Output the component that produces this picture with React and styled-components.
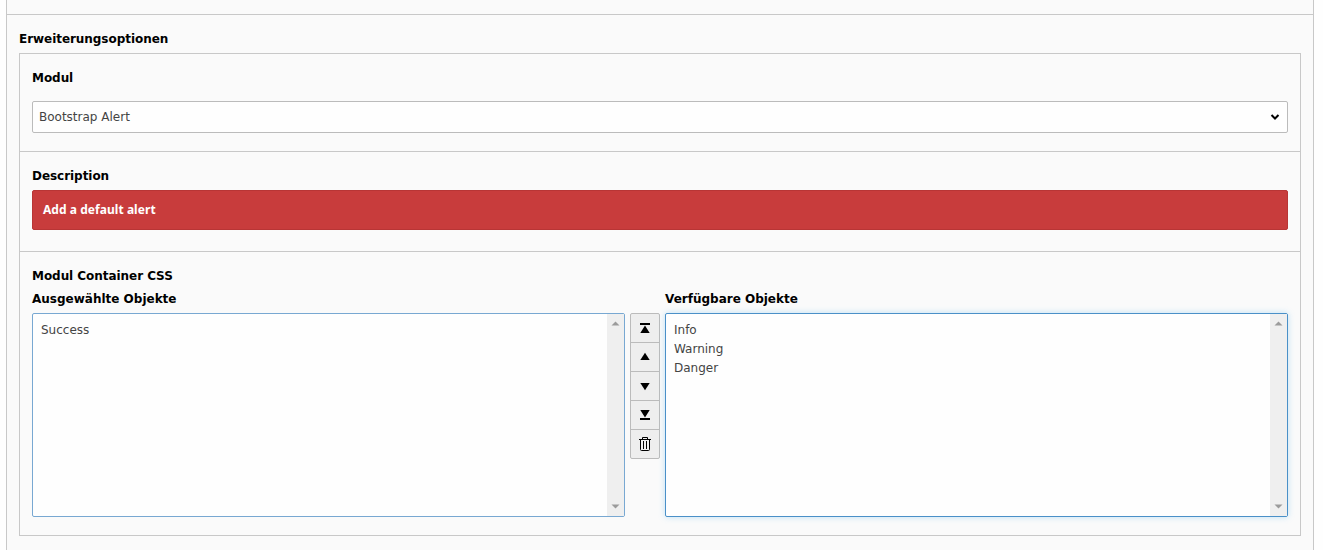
import React from 'react';
import styled, { createGlobalStyle } from 'styled-components';

const Global = createGlobalStyle`
  * { box-sizing: border-box; }
  body { margin: 0; background: #fefefe; overflow: hidden; font: 12px/18px "DejaVu Sans", Verdana, sans-serif; color: #000; }
`;
const Page = styled.main`
  width: 1308px; height: 550px; margin-left: 6px; background: #fafafa;
  border: solid #c8c8c8; border-width: 0 1px;
`;
const Previous = styled.div`height: 15px; border-bottom: 1px solid #c8c8c8;`;
const Body = styled.div`padding: 15px 12px 0;`;
const Label = styled.div`
  height: 18px; line-height: 18px; font-weight: bold; white-space: nowrap;
  letter-spacing: ${p => p.$spacing ?? -0.05}px;
`;
const Panel = styled.div`margin-top: 5px; height: 483px; border: 1px solid #c8c8c8;`;
const Section = styled.section`
  height: ${p => p.$height}px; padding: 15px 12px 0;
  border-bottom: ${p => (p.$last ? 0 : 1)}px solid #c8c8c8;
`;
const Select = styled.div`
  display: flex; align-items: center; justify-content: space-between;
  height: 32px; margin-top: 14px; padding: 0 7px 1px 6px; background: #fefefe;
  border: 1px solid #bbb; border-radius: 2px; color: #444;
`;
const Alert = styled.div`
  height: 40px; margin-top: 5px; padding: 0 10px; line-height: 38px;
  background: #c83c3c; border: 1px solid #b83535; border-radius: 2px; color: #fff;
  font-family: "Noto Sans", sans-serif; font-weight: bold; letter-spacing: 0.05px;
`;
const Columns = styled.div`display: flex; margin-top: 5px;`;
const Column = styled.div`width: ${p => p.$width}px;`;
const List = styled.div`
  display: flex; justify-content: space-between; height: 204px; margin-top: 5px;
  background: #fefefe; border: 1px solid ${p => (p.$focus ? '#4a90c8' : '#78a8d2')}; border-radius: 2px;
  box-shadow: ${p => (p.$focus ? '0 0 6px rgba(102, 190, 240, .4)' : 'none')};
`;
const Options = styled.div`padding: 7px 8px; color: #444;`;
const Option = styled.div`height: 19px; line-height: 19px;`;
const Scrollbar = styled.div`
  display: flex; flex-direction: column; justify-content: space-between; align-items: center;
  width: 17px; padding: 7px 0; background: #efefef;
  svg { display: block; }
`;
const Controls = styled.div`
  width: 30px; height: 146px; margin: 23px 5px 0; border: 1px solid #bbb; border-radius: 2px; background: #eee;
`;
const Control = styled.button`
  display: block; width: 28px; height: ${p => (p.$last ? 28 : 29)}px; padding: 6px;
  border: 0; border-bottom: ${p => (p.$last ? 0 : 1)}px solid #bbb; background: transparent;
  svg { display: block; }
`;

const shapes = {
  top: <path d="M3 3h10v2H3zM8 5.5l4.7 7.5H3.3z" />,
  up: <path d="M8 3.8l4.7 7.2H3.3z" />,
  down: <path d="M8 12.2L12.7 5H3.3z" />,
  bottom: <path d="M8 10.5L12.7 3H3.3zM3 11h10v2H3z" />,
  trash: <path d="M2 3.5h12M5.5 3V1.5h5V3M3.5 4v9.5q0 1 1 1h7q1 0 1-1V4M6.5 5v8M9.5 5v8" fill="none" stroke="#000" />,
};
const Bars = () => (
  <Scrollbar>
    <svg width="9" height="5"><path d="M4.5 .5L8.5 4.5h-8z" fill="#9b9b9b" /></svg>
    <svg width="9" height="5"><path d="M4.5 4.5L8.5 .5h-8z" fill="#9b9b9b" /></svg>
  </Scrollbar>
);

export default function App() {
  return (
    <>
      <Global />
      <Page>
        <Previous />
        <Body>
          <Label>Erweiterungsoptionen</Label>
          <Panel>
            <Section $height={98}>
              <Label>Modul</Label>
              <Select>
                <span>Bootstrap Alert</span>
                <svg width="10" height="8"><path d="M1.5 2L5 5.5L8.5 2" fill="none" stroke="#000" strokeWidth="2" /></svg>
              </Select>
            </Section>
            <Section $height={100}>
              <Label>Description</Label>
              <Alert>Add a default alert</Alert>
            </Section>
            <Section $height={283} $last>
              <Label>Modul Container CSS</Label>
              <Columns>
                <Column $width={593}>
                  <Label $spacing={0}>Ausgewählte Objekte</Label>
                  <List><Options><Option>Success</Option></Options><Bars /></List>
                </Column>
                <Controls>
                  {Object.keys(shapes).map(k => (
                    <Control key={k} $last={k === 'trash'}><svg width="16" height="16">{shapes[k]}</svg></Control>
                  ))}
                </Controls>
                <Column $width={623}>
                  <Label $spacing={0}>Verfügbare Objekte</Label>
                  <List $focus>
                    <Options><Option>Info</Option><Option>Warning</Option><Option>Danger</Option></Options>
                    <Bars />
                  </List>
                </Column>
              </Columns>
            </Section>
          </Panel>
        </Body>
      </Page>
    </>
  );
}
